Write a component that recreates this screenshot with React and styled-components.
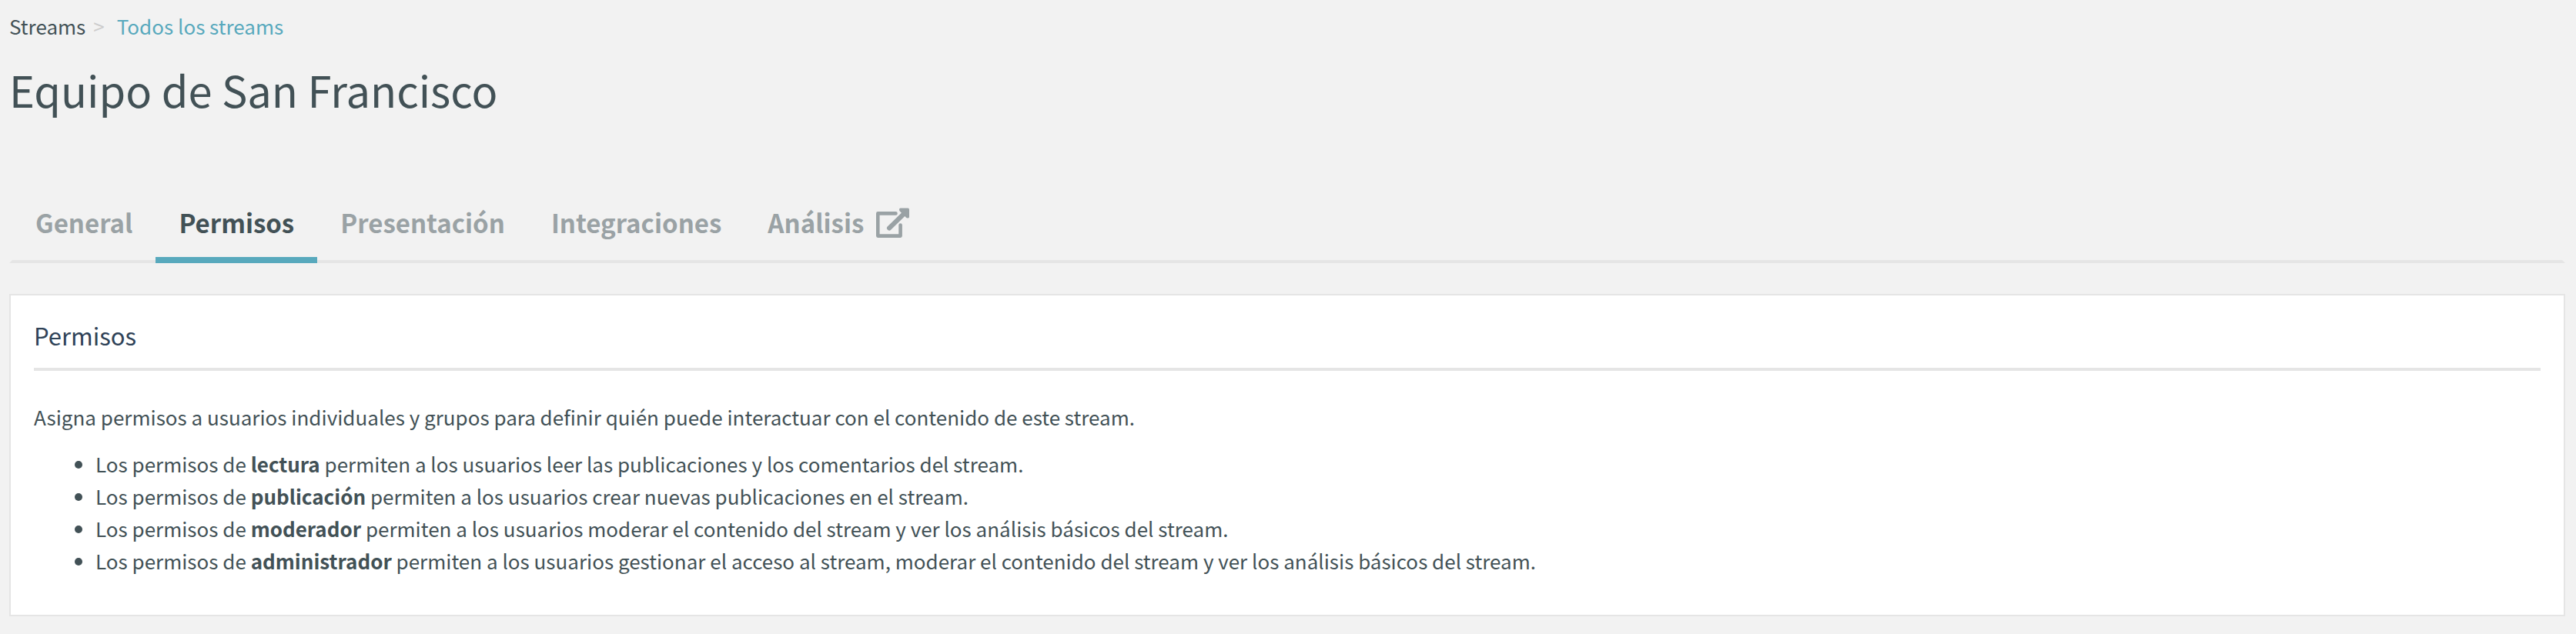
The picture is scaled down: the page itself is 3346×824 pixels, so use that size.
import React from "react";
import styled, { createGlobalStyle } from "styled-components";

const GlobalStyle = createGlobalStyle`
  *, *::before, *::after { box-sizing: border-box; }
  body {
    margin: 0;
    background: #f2f2f2;
    color: #425156;
    font-family: "Noto Sans CJK SC", "Noto Sans", sans-serif;
  }
`;

const Page = styled.div`
  padding: 18px 14px 24px 12px;
`;

const Breadcrumbs = styled.nav`
  display: flex;
  align-items: center;
  gap: 10px;
  font-size: 26px;
  line-height: 32px;
`;

const Crumb = styled.a`
  color: ${(p) => (p.$accent ? "#58a9bd" : "#425156")};
  text-decoration: none;
`;

const Separator = styled.span`
  margin-right: 6px;
  color: #cccccc;
`;

const Title = styled.h1`
  margin: 24px 0 0;
  font-size: 56px;
  font-weight: 400;
  line-height: 84px;
`;

const Tabs = styled.nav`
  display: flex;
  margin-top: 80px;
  border: 4px solid transparent;
  border-top: 0;
  border-bottom-color: #e5e5e5;
`;

const Tab = styled.a`
  display: flex;
  align-items: center;
  gap: 16px;
  height: 104px;
  margin-bottom: -4px;
  padding: 6px 30px 0;
  border-bottom: 8px solid ${(p) => (p.$active ? "#58a9bd" : "transparent")};
  color: ${(p) => (p.$active ? "#425156" : "#9aa2a5")};
  font-size: 33px;
  font-weight: 700;
  line-height: 48px;
  text-decoration: none;
`;

const Card = styled.section`
  margin-top: 40px;
  padding: 30px;
  border: 2px solid #e5e5e5;
  background: #fff;
`;

const CardTitle = styled.h2`
  margin: 0;
  padding-bottom: 20px;
  border-bottom: 4px solid #e5e5e5;
  color: #2f4257;
  font-size: 31px;
  font-weight: 400;
  line-height: 44px;
`;

const Intro = styled.p`
  margin: 39px 0 19px;
  font-size: 26px;
  line-height: 42px;
`;

const List = styled.ul`
  margin: 0 0 19px;
  padding-left: 80px;
  font-size: 26px;
  line-height: 42px;
`;

const tabs = ["General", "Permisos", "Presentación", "Integraciones"];

const permissions = [
  ["lectura", "permiten a los usuarios leer las publicaciones y los comentarios del stream."],
  ["publicación", "permiten a los usuarios crear nuevas publicaciones en el stream."],
  ["moderador", "permiten a los usuarios moderar el contenido del stream y ver los análisis básicos del stream."],
  ["administrador", "permiten a los usuarios gestionar el acceso al stream, moderar el contenido del stream y ver los análisis básicos del stream."],
];

function ExternalIcon() {
  return (
    <svg width="43" height="39" viewBox="0 0 43 39" aria-hidden="true">
      <g fill="none" stroke="currentColor" strokeWidth="4.6" strokeLinecap="round" strokeLinejoin="round">
        <path d="M25.5 7.4H2.3V36.6H31.6V22.5" />
        <path d="M17 26.5L37 7" strokeWidth="6" />
      </g>
      <path fill="currentColor" d="M31.5 0.6H41.4Q43 0.6 43 2.2V12Q43 13.5 41 13.5Q39.5 13.5 38.5 12.2L31.5 5.2Q30 4.2 30 2.4Q30 0.6 31.5 0.6Z" />
    </svg>
  );
}

export default function App() {
  return (
    <>
      <GlobalStyle />
      <Page>
        <Breadcrumbs aria-label="Ruta">
          <Crumb href="#streams">Streams</Crumb>
          <Separator>&gt;</Separator>
          <Crumb href="#todos" $accent>Todos los streams</Crumb>
        </Breadcrumbs>
        <Title>Equipo de San Francisco</Title>
        <Tabs>
          {tabs.map((name) => (
            <Tab key={name} href={"#" + name} $active={name === "Permisos"}>{name}</Tab>
          ))}
          <Tab href="#analisis">
            Análisis
            <ExternalIcon />
          </Tab>
        </Tabs>
        <Card>
          <CardTitle>Permisos</CardTitle>
          <Intro>
            Asigna permisos a usuarios individuales y grupos para definir quién puede interactuar con el contenido de este stream.
          </Intro>
          <List>
            {permissions.map(([role, text]) => (
              <li key={role}>Los permisos de <strong>{role}</strong> {text}</li>
            ))}
          </List>
        </Card>
      </Page>
    </>
  );
}
